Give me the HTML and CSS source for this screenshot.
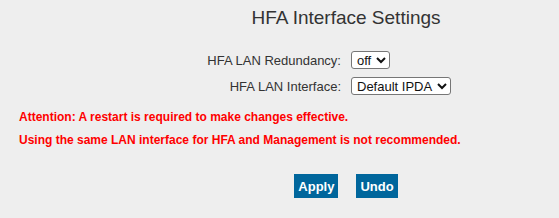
FILE: index.html
```html
<!DOCTYPE html>
<html lang="en">
<head>
  <meta charset="UTF-8" />
  <title>HFA Interface Settings</title>
  <link rel="stylesheet" href="styles.css">
</head>
<body>
  <div class="page">
    <h2 class="title">HFA Interface Settings</h2>
    <div class="form">
      <label class="label" for="redundancy">HFA LAN Redundancy:</label>
      <div class="field">
        <select id="redundancy" class="select">
          <option>off</option>
          <option>on</option>
        </select>
      </div>
      <label class="label" for="lanIf">HFA LAN Interface:</label>
      <div class="field">
        <select id="lanIf" class="select">
          <option>Default IPDA</option>
          <option>Management</option>
        </select>
      </div>
    </div>
  </div>

  <div class="notes">
    <p class="note">Attention: A restart is required to make changes effective.</p>
    <p class="note">Using the same LAN interface for HFA and Management is not recommended.</p>
  </div>

  <div class="page">
    <div class="btn-group">
      <button class="btn">Apply</button>
      <button class="btn">Undo</button>
    </div>
  </div>
</body>
</html>
```

FILE: styles.css
```css
body {
  margin: 0;
  background-color: #eeeeee;
  font-family: "Liberation Sans", Arial, sans-serif;
  color: #333;
  overflow: hidden;
}
.page {
  padding-left: 133px;
}
.title {
  margin: 0;
  padding-top: 7px;
  font-size: 19px;
  font-weight: normal;
  line-height: 22px;
  text-align: center;
  color: #333;
}
.form {
  display: grid;
  grid-template-columns: 1fr 1fr;
  column-gap: 10px;
  row-gap: 8px;
  margin-top: 22px;
  align-items: center;
}
.label {
  text-align: right;
  font-size: 13px;
  color: #333;
}
.select {
  font-family: "Liberation Sans", Arial, sans-serif;
  font-size: 13px;
  height: 18px;
  padding: 0 1px;
  border: 1px solid #767676;
  border-radius: 3px;
  background: #fff;
  color: #111;
}
.notes {
  padding: 14px 0 0 19px;
}
.note {
  margin: 0 0 7px;
  font-size: 12px;
  font-weight: bold;
  line-height: 16px;
  color: #ff0000;
}
.btn-group {
  display: flex;
  justify-content: center;
  gap: 18px;
  margin-top: 26px;
}
.btn {
  height: 24px;
  padding: 0 4px;
  background-color: #00669c;
  color: #fff;
  border: none;
  font-family: "Liberation Sans", Arial, sans-serif;
  font-size: 13px;
  font-weight: bold;
  cursor: pointer;
}
```
